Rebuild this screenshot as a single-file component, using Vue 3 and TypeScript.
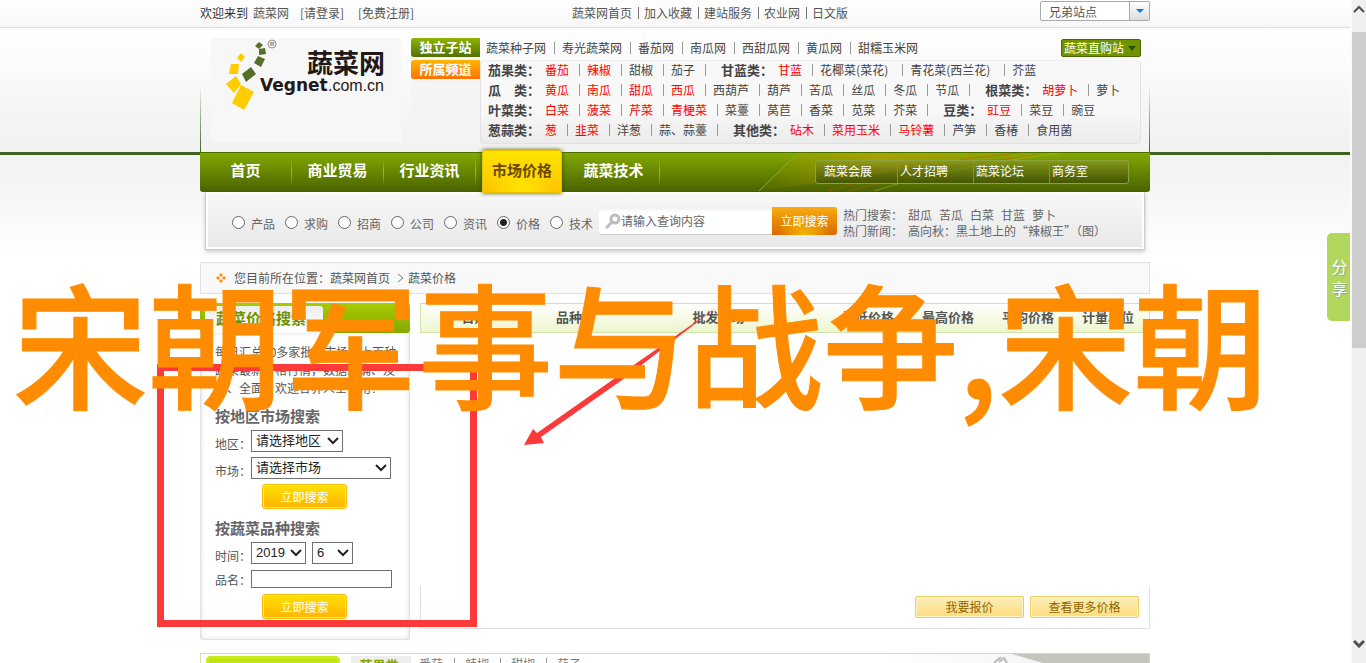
<script setup lang="ts">
import { ref } from 'vue'

interface Veg { name: string; hot?: boolean }
interface Group { title: string; items: Veg[] }

const list = (names: string): Veg[] =>
  names.split(' ').map((n) => (n.startsWith('*') ? { name: n.slice(1), hot: true } : { name: n }))

const topLinks = ['蔬菜网首页', '加入收藏', '建站服务', '农业网', '日文版']
const siteLinks = ['蔬菜种子网', '寿光蔬菜网', '番茄网', '南瓜网', '西甜瓜网', '黄瓜网', '甜糯玉米网']
const rows: Group[][] = [
  [
    { title: '茄果类：', items: list('*番茄 *辣椒 甜椒 茄子') },
    { title: '甘蓝类：', items: list('*甘蓝 花椰菜(菜花) 青花菜(西兰花) 芥蓝') },
  ],
  [
    { title: '瓜　类：', items: list('*黄瓜 *南瓜 *甜瓜 *西瓜 西葫芦 葫芦 苦瓜 丝瓜 冬瓜 节瓜') },
    { title: '根菜类：', items: list('*胡萝卜 萝卜') },
  ],
  [
    { title: '叶菜类：', items: list('*白菜 *菠菜 *芹菜 *青梗菜 菜薹 莴苣 香菜 苋菜 芥菜') },
    { title: '豆类：', items: list('*豇豆 菜豆 豌豆') },
  ],
  [
    { title: '葱蒜类：', items: list('*葱 *韭菜 洋葱 蒜、蒜薹') },
    { title: '其他类：', items: list('*砧木 *菜用玉米 *马铃薯 芦笋 香椿 食用菌') },
  ],
]
const navItems = ['首页', '商业贸易', '行业资讯', '市场价格', '蔬菜技术']
const subNav = ['蔬菜会展', '人才招聘', '蔬菜论坛', '商务室']
const kinds = ['产品', '求购', '招商', '公司', '资讯', '价格', '技术']
const kind = ref('价格')
const keyword = ref('请输入查询内容')
const hotWords = ['甜瓜', '苦瓜', '白菜', '甘蓝', '萝卜']
const columns = ['日期', '品种', '批发市场', '最低价格', '最高价格', '平均价格', '计量单位']
const footItems = ['番茄', '辣椒', '甜椒', '茄子']
const product = ref('')
</script>

<template>
  <div class="shell">
    <div class="page">
      <div class="topbar">
        <div class="wrap topbar-in">
          <span class="welcome">欢迎来到</span>
          <a href="#" class="site">蔬菜网</a>
          <a href="#" class="login">[请登录]</a>
          <a href="#" class="register">[免费注册]</a>
          <nav class="top-links">
            <a v-for="l in topLinks" :key="l" href="#">{{ l }}</a>
          </nav>
          <button class="brother" type="button">
            <span>兄弟站点</span>
            <i><svg width="8" height="4" viewBox="0 0 8 4"><path d="M0 0h8L4 4z" fill="#0a78f0" /></svg></i>
          </button>
        </div>
      </div>

      <header class="header">
        <div class="wrap header-in">
          <svg class="logo" width="190" height="104" viewBox="0 0 190 104" role="img" aria-label="蔬菜网">
            <g fill="#556f2b">
              <path d="M48 4l4 3-4 4-4-3z" />
              <path d="M48 11l6-1 1 6-7 1z" />
              <path d="M47 18l7 3-4 8-7-4z" />
              <path d="M40 29l5 7-10 8-4-8z" />
            </g>
            <g fill="#fc0">
              <path d="M30 15l4 4-4 5-4-4z" />
              <path d="M20 26h8l-1 10h-9z" />
              <path d="M25 38l5 8-7 9-8-9z" />
              <path d="M30 47l13 7-10 18-12-7z" />
            </g>
            <circle cx="61" cy="6" r="4" fill="none" stroke="#666" stroke-width=".7" />
            <text x="59" y="8" class="reg">R</text>
            <text x="96" y="35" class="logo-cn">蔬菜网</text>
            <text x="49" y="53" class="logo-en">Vegnet</text>
            <text x="117" y="53" class="logo-com">.com.cn</text>
          </svg>
          <div class="tags">
            <strong class="tag green">独立子站</strong>
            <strong class="tag orange">所属频道</strong>
          </div>
          <div class="dir">
            <div class="site-row">
              <nav class="site-links">
                <a v-for="l in siteLinks" :key="l" href="#">{{ l }}</a>
              </nav>
              <button type="button" class="direct">
                蔬菜直购站
                <svg width="8" height="5" viewBox="0 0 8 5"><path d="M0 0h8L4 5z" fill="#2f4d00" /></svg>
              </button>
            </div>
            <div class="cats">
              <div v-for="(row, r) in rows" :key="r" class="cat-row">
                <div v-for="g in row" :key="g.title" class="cat">
                  <strong>{{ g.title }}</strong>
                  <a v-for="v in g.items" :key="v.name" href="#" :class="{ hot: v.hot, paren: v.name.includes('(') }">{{ v.name }}</a>
                </div>
              </div>
            </div>
          </div>
        </div>
      </header>

      <div class="band">
        <div class="wrap">
          <nav class="nav">
            <svg class="streaks" width="391" height="38" viewBox="0 0 391 38">
              <defs>
                <linearGradient id="glow" x1="0" x2="1">
                  <stop offset="0" stop-color="#d2a000" stop-opacity="0" />
                  <stop offset=".35" stop-color="#d2a000" stop-opacity=".5" />
                  <stop offset=".9" stop-color="#d2a000" stop-opacity="0" />
                </linearGradient>
              </defs>
              <path d="M39 0H340L180 12 0 38z" fill="url(#glow)" />
              <path d="M0 38L39 0" stroke="#8fae2a" fill="none" />
              <g fill="none" stroke="#c25a00" stroke-opacity=".5">
                <path d="M70 38Q160 8 260 0" /><path d="M90 38Q180 12 280 2" />
                <path d="M115 38Q190 14 300 0" stroke="#b5c400" />
              </g>
            </svg>
            <a v-for="n in navItems" :key="n" href="#" class="nav-item" :class="{ active: n === '市场价格' }"><span>{{ n }}</span></a>
            <div class="subnav">
              <a v-for="s in subNav" :key="s" href="#">{{ s }}</a>
            </div>
          </nav>
          <form class="search" @submit.prevent>
            <div class="kinds">
              <label v-for="k in kinds" :key="k">
                <input v-model="kind" type="radio" name="kind" :value="k" />{{ k }}
              </label>
            </div>
            <div class="query">
              <svg width="16" height="16" viewBox="0 0 16 16" fill="none" stroke="#bdbdbd">
                <circle cx="10" cy="6" r="4" stroke-width="3" /><path d="M7 9l-6 6" stroke-width="3" />
              </svg>
              <input v-model="keyword" type="text" aria-label="查询内容" />
            </div>
            <button type="submit" class="go">立即搜索</button>
            <dl class="hots">
              <dt>热门搜索：</dt>
              <dd><a v-for="h in hotWords" :key="h" href="#">{{ h }}</a></dd>
              <dt>热门新闻：</dt>
              <dd><a href="#">高向秋：黑土地上的“辣椒王”（图）</a></dd>
            </dl>
          </form>
        </div>
      </div>

      <main class="wrap">
        <div class="crumb">
          <svg width="10" height="10" viewBox="0 0 10 10" fill="#ff8c00">
            <path d="M5 0l2 2-2 2-2-2zM5 6l2 2-2 2-2-2zM2 3l2 2-2 2-2-2zM8 3l2 2-2 2-2-2z" />
          </svg>
          <span>您目前所在位置：</span><a href="#">蔬菜网首页</a>
          <svg class="gt" width="7" height="10" viewBox="0 0 7 10"><path d="M1 1l5 4-5 4" fill="none" stroke="#777" /></svg>
          <a href="#">蔬菜价格</a>
        </div>

        <div class="columns">
          <aside class="side">
            <div class="side-head"><h2>蔬菜价格搜索</h2></div>
            <div class="side-body">
              <p>每日汇总50多家批发市场、上百种<br />蔬菜最新价格行情，数据准确、及<br />时、全面，欢迎各界人士使用！</p>
              <form @submit.prevent>
                <h3>按地区市场搜索</h3>
                <div class="field">
                  <label for="area">地区：</label>
                  <select id="area" class="w-area"><option>请选择地区</option></select>
                </div>
                <div class="field">
                  <label for="market">市场：</label>
                  <select id="market" class="w-market"><option>请选择市场</option></select>
                </div>
                <button type="submit" class="yellow">立即搜索</button>
              </form>
              <form @submit.prevent>
                <h3>按蔬菜品种搜索</h3>
                <div class="field">
                  <label for="year">时间：</label>
                  <select id="year" class="w-year"><option>2019</option></select>
                  <select class="w-month" aria-label="月份"><option>6</option></select>
                </div>
                <div class="field name">
                  <label for="product">品名：</label>
                  <input id="product" v-model="product" type="text" />
                </div>
                <button type="submit" class="yellow">立即搜索</button>
              </form>
            </div>
          </aside>

          <section class="prices">
            <table>
              <colgroup>
                <col class="c-date" /><col class="c-kind" /><col /><col class="c-price" /><col class="c-price" /><col class="c-price" /><col class="c-price" />
              </colgroup>
              <thead>
                <tr><th v-for="c in columns" :key="c" scope="col">{{ c }}</th></tr>
              </thead>
            </table>
            <div class="actions">
              <button type="button">我要报价</button>
              <button type="button">查看更多价格</button>
            </div>
          </section>
        </div>

        <section class="more">
          <div class="more-title"></div>
          <strong>茄果类</strong>
          <nav><a v-for="f in footItems" :key="f" href="#">{{ f }}</a></nav>
          <svg class="fold" width="270" height="40" viewBox="0 0 270 40">
            <defs><linearGradient id="fade" x1="0" x2="1"><stop offset="0" stop-color="#fff" /><stop offset="1" stop-color="#eee" /></linearGradient></defs>
            <path d="M0 0h270v40H0z" fill="url(#fade)" />
            <path d="M133 0h137v40z" fill="#c4c6be" />
            <path d="M115 9l7-6M120 8l5-4 3 5" fill="none" stroke="#bbb" stroke-width="2" />
          </svg>
        </section>
      </main>

      <button type="button" class="share"><span>分</span><span>享</span></button>
    </div>

    <div class="scroll" aria-hidden="true">
      <svg width="12" height="8" viewBox="0 0 12 8"><path d="M1 7l5-5 5 5" fill="none" stroke="#505050" stroke-width="2" /></svg>
      <div class="track"><div class="thumb"></div></div>
      <svg width="12" height="8" viewBox="0 0 12 8"><path d="M1 1l5 5 5-5" fill="none" stroke="#505050" stroke-width="3" /></svg>
    </div>

    <div class="mark-box"></div>
    <svg class="mark-arrow" width="194" height="140" viewBox="0 0 194 140">
      <path d="M0 138l9-16 4 4L94 69 193 0 98 73 17 130l3 6z" fill="#fc3a3a" />
    </svg>
    <div class="headline">宋朝军事与战争,宋朝</div>
  </div>
</template>

<style>
body { overflow: hidden; }
</style>

<style scoped>
.shell, .shell * { box-sizing: border-box; }
.shell {
  position: relative;
  display: flex;
  height: 100vh;
  overflow: hidden;
  background: #fff;
  color: #555;
  font: 12px/16px "Noto Sans CJK SC", "Liberation Sans", sans-serif;
}
a { color: inherit; text-decoration: none; }
button, input, select { font: inherit; color: inherit; margin: 0; padding: 0; border-radius: 0; }
button { cursor: pointer; white-space: nowrap; }
h2, h3, p, dl, dd { margin: 0; }
.page { position: relative; flex: 1; min-width: 0; overflow: hidden; }
.wrap { width: 950px; margin: 0 auto; }

.topbar { background: linear-gradient(#fff, #f7f7f7); border-bottom: 1px solid #ddd; }
.topbar-in { display: flex; height: 27px; padding-bottom: 1px; align-items: center; }
.welcome { color: #333; width: 53px; }
.site { width: 47px; }
.login { width: 58px; }
.register { width: 214px; }
.top-links, .site-links { display: flex; align-items: center; }
.top-links a, .site-links a { display: flex; align-items: center; }
.top-links a + a::before { content: ""; width: 1px; height: 12px; background: #777; margin: 0 5px 0 6px; }
.brother { display: flex; margin-left: auto; width: 110px; height: 20px; padding: 0; background: #fff; border: 1px solid #aaa; border-radius: 2px; text-align: left; align-self: flex-start; margin-top: 1px; }
.brother span { flex: 1; padding-left: 8px; line-height: 20px; }
.brother i { display: flex; align-items: center; justify-content: center; width: 20px; height: 18px; border-left: 1px solid #aaa; background: linear-gradient(#fff, #ddd); }

.header { background: linear-gradient(#fff, #f1f1f1); }
.header-in { position: relative; display: flex; padding: 10px 9px 8px 11px; color: #444; }
.header-in::before, .header-in::after { content: ""; position: absolute; top: 56px; bottom: 0; left: 0; width: 1px; background: linear-gradient(transparent, #3c6a1c); }
.header-in::after { left: auto; right: 0; }
.logo { background: #f7f7f7; flex: none; }
.reg { font: 6px "Liberation Sans", sans-serif; fill: #444; }
.logo-cn { font: bold 26px "Noto Sans CJK SC", sans-serif; fill: #231815; }
.logo-en { font: bold 17px "DejaVu Sans", sans-serif; fill: #231815; }
.logo-com { font: 16px "Liberation Sans", sans-serif; fill: #231815; }
.tags { width: 69px; margin-left: 10px; display: flex; flex-direction: column; gap: 3px; background: #f4f4f4; }
.tag { height: 19px; color: #fff; font-size: 13px; line-height: 18px; text-align: center; border-radius: 3px 0 0 3px; }
.green { background: linear-gradient(#8fb400, #527000); }
.orange { background: linear-gradient(#ffb400, #ff7200); }
.dir { flex: 1; min-width: 0; }
.site-row { display: flex; justify-content: space-between; height: 22px; padding: 1px 0 3px 6px; }
.site-links a + a::before { content: ""; width: 1px; height: 12px; background: #999; margin: 0 7px 0 8px; }
.direct { display: flex; align-items: center; gap: 4px; height: 18px; padding: 0 4px 0 2px; color: #fff; background: #709400; border: 1px solid #4d6c00; border-radius: 2px; }
.cats { padding: 0 0 2px 7px; background: linear-gradient(#f8f8f8 60%, #ebebeb); border: 1px solid #e2e2e2; border-top-color: #f0f0f0; border-radius: 4px; }
.cat-row, .cat, .cat a { display: flex; align-items: center; white-space: nowrap; }
.cat-row { height: 20px; padding-bottom: 2px; }
.cat strong { font-size: 13px; margin-right: 5px; }
.cat + .cat { margin-left: 8px; }
.cat a::after { content: ""; width: 1px; height: 12px; background: #999; margin: 0 7px 0 10px; }
.cat a.paren::after { margin-left: 14px; }
.cat:last-child a:last-child::after { display: none; }
.hot { color: #f00; }

.band { border-top: 3px solid #3c6420; background: linear-gradient(#f2f2f2, #fff); padding-bottom: 12px; }
.nav { position: relative; display: flex; height: 40px; margin-top: -3px; background: linear-gradient(#82a800, #4c6400); border-top: 1px solid #4c7000; border-bottom: 1px solid #456000; border-radius: 0 0 3px 3px; }
.streaks { position: absolute; right: 0; top: 0; }
.nav-item { display: flex; width: 92px; align-items: center; justify-content: center; color: #fff; font-size: 15px; font-weight: bold; border-right: 1px solid #86a32d; border-image: linear-gradient(transparent 15%, #a0b84c, transparent 85%) 1; padding-bottom: 5px; }
.nav-item.active { border-right: 0; align-items: stretch; padding: 0 6px; margin: -3px 0 -2px; color: #6b4a00; }
.active span { flex: 1; text-align: center; line-height: 38px; background: radial-gradient(ellipse at 50% 100%, #ffe600, transparent 60%), linear-gradient(#ffe400, #ffc400); border: 1px solid #e8c000; border-radius: 3px 3px 0 0; box-shadow: 0 0 4px #2f5000; }
.subnav { position: relative; display: flex; width: 314px; height: 24px; margin: 7px 21px 0 auto; padding-left: 5px; color: #fff; line-height: 20px; border: 1px solid #8ba43c; border-radius: 3px; background: linear-gradient(rgba(140, 150, 40, .6), rgba(65, 80, 0, .8)); }
.subnav a { width: 76px; padding-left: 2px; border-left: 1px solid #819338; }
.subnav a:first-child { border-color: transparent; }

.search { display: flex; height: 58px; margin: 0 5px; padding: 15px 0 0 26px; background: linear-gradient(#f8f8f8, #e8e8e8); border: 1px solid #ccc; border-top: 0; box-shadow: inset 0 0 0 2px #fff, 0 2px 4px rgba(0, 0, 0, .2); color: #666; }
.kinds { display: flex; gap: 10px; height: 16px; margin-top: 9px; }
.kinds label { display: flex; align-items: center; width: 43px; white-space: nowrap; }
.kinds input { appearance: none; flex: none; width: 13px; height: 13px; margin-right: 6px; border: 1px solid #666; border-radius: 50%; background: #fff; margin-bottom: 3px; }
.kinds input:checked { background: radial-gradient(circle, #222 3px, #fff 4px); }
.query { display: flex; align-items: center; width: 173px; height: 28px; margin-left: 6px; padding-left: 6px; background: linear-gradient(#eee, #fff 5px); border-bottom: 1px solid #ccc; border-radius: 3px 0 0 3px; }
.query input { width: 140px; height: 24px; border: 0; background: none; outline: 0; }
.go { width: 65px; height: 28px; border: 0; border-radius: 0 3px 3px 0; color: #fff; background: radial-gradient(ellipse at 50% 110%, #f8c000, transparent 60%), linear-gradient(#f8ac10, #d96800); }
.hots { display: grid; grid-template-columns: 65px auto; margin-left: 6px; align-content: start; }
.hots dd { display: flex; gap: 7px; white-space: nowrap; }

.crumb { display: flex; align-items: center; height: 32px; padding-left: 15px; background: #f9f9f9; border: 1px solid #e1e1e1; }
.crumb span { margin-left: 8px; }
.gt { margin: 0 4px 0 7px; }

.columns { display: flex; gap: 10px; margin-top: 9px; }
.side { width: 210px; }
.side-head { height: 30px; padding: 3px 0 0 5px; background: linear-gradient(#a8cc00, #85a800); border-radius: 3px; }
.side-head h2 { width: 118px; height: 27px; padding-left: 11px; font-size: 15px; line-height: 24px; color: #6f9200; background: linear-gradient(#eee, #fff); border-radius: 3px 3px 0 0; }
.side-body { padding: 10px 0 20px 14px; border: 1px solid #e0e0e0; border-top: 0; border-radius: 0 0 3px 3px; box-shadow: inset 0 0 5px #ddd; }
.side-body p { line-height: 18px; white-space: nowrap; }
.side-body h3 { margin: 9px 0 4px; font-size: 15px; line-height: 20px; color: #666; }
.field { display: flex; align-items: flex-end; margin-bottom: 5px; }
.field label { width: 36px; white-space: nowrap; }
.field select, .field input { height: 22px; border: 1px solid #707070; background-color: #fff; color: #222; }
.field select { appearance: none; padding-left: 4px; font: 13px/18px "Liberation Sans", "Noto Sans CJK SC", sans-serif; background: #fff url("data:image/svg+xml,%3Csvg xmlns='http://www.w3.org/2000/svg' width='12' height='8'%3E%3Cpath d='M1 1l5 5 5-5' fill='none' stroke='%23222' stroke-width='2'/%3E%3C/svg%3E") no-repeat right 3px center; }
.w-area { width: 92px; }
.w-market { width: 140px; }
.w-year { width: 55px; margin-right: 6px; }
.w-month { width: 41px; }
.name { margin: 6px 0; }
.field input { width: 141px; height: 18px; }
.yellow { display: block; width: 85px; height: 25px; margin-left: 47px; color: #fff; background: linear-gradient(#ffe000, #ffb400); border: 1px solid #ffb800; border-radius: 3px; box-shadow: inset 0 0 0 1px #ffec80; }

.prices { flex: 1; min-width: 0; display: flex; flex-direction: column; justify-content: space-between; margin-bottom: 11px; }
table { width: 100%; height: 30px; table-layout: fixed; border-collapse: separate; border-spacing: 0; border: 1px solid #cfe3aa; background: linear-gradient(#fff, #edf6cc); }
th { padding: 0 2px 2px 0; font-size: 13px; line-height: 20px; white-space: nowrap; }
.c-date { width: 109px; }
.c-kind, .c-price { width: 80px; }
.actions { display: flex; justify-content: flex-end; gap: 6px; padding: 10px 10px; border: 1px solid #e1e1e1; border-top: 0; }
.actions button { width: 109px; height: 22px; color: #8f6500; background: linear-gradient(#fbeebb, #fedc7c); border: 1px solid #eccb60; border-radius: 2px; box-shadow: inset 0 0 0 1px #fff4cf; }

.more { position: relative; display: flex; height: 80px; margin-top: 13px; padding: 2px 0 0 5px; border: 1px solid #cfe0a8; color: #777; }
.more-title { width: 134px; height: 40px; border-radius: 5px; background: linear-gradient(#b8e000, #e4f67c); box-shadow: inset 0 0 0 3px #c8ea18; }
.more strong { width: 60px; height: 20px; margin: 0 8px 0 11px; padding-right: 4px; font-size: 13px; line-height: 18px; text-align: center; color: #86a800; background: #eee; }
.more nav a { display: flex; align-items: center; }
.more nav { display: flex; align-items: flex-start; }
.more nav a + a::before { content: ""; width: 1px; height: 12px; background: #999; margin: 0 10px 0 11px; }
.fold { position: absolute; right: 0; top: 0; }

.share { position: absolute; right: 0; top: 233px; display: flex; flex-direction: column; align-items: center; justify-content: center; width: 23px; height: 88px; padding-left: 2px; color: #fff; font-size: 16px; line-height: 22px; background: #b1d75c; border: 0; border-radius: 5px 0 0 5px; text-shadow: 1px 1px 1px #8a9; }

.scroll { display: flex; flex-direction: column; align-items: center; width: 16px; padding: 5px 0 15px; background: #f0f0f0; border-left: 2px solid #fafafa; }
.track { flex: 1; width: 100%; padding-top: 19px; }
.thumb { height: 52%; background: #cdcdcd; }

.mark-box { position: absolute; left: 157px; top: 364px; width: 320px; height: 263px; border: 7px solid #fc3a3a; pointer-events: none; }
.mark-arrow { position: absolute; left: 524px; top: 307px; pointer-events: none; }
.headline { position: absolute; left: 13px; top: 273px; font-size: 135px; line-height: 134px; font-weight: 500; color: #ff8c00; -webkit-text-stroke: 1px #ff8c00; white-space: nowrap; pointer-events: none; }
</style>
